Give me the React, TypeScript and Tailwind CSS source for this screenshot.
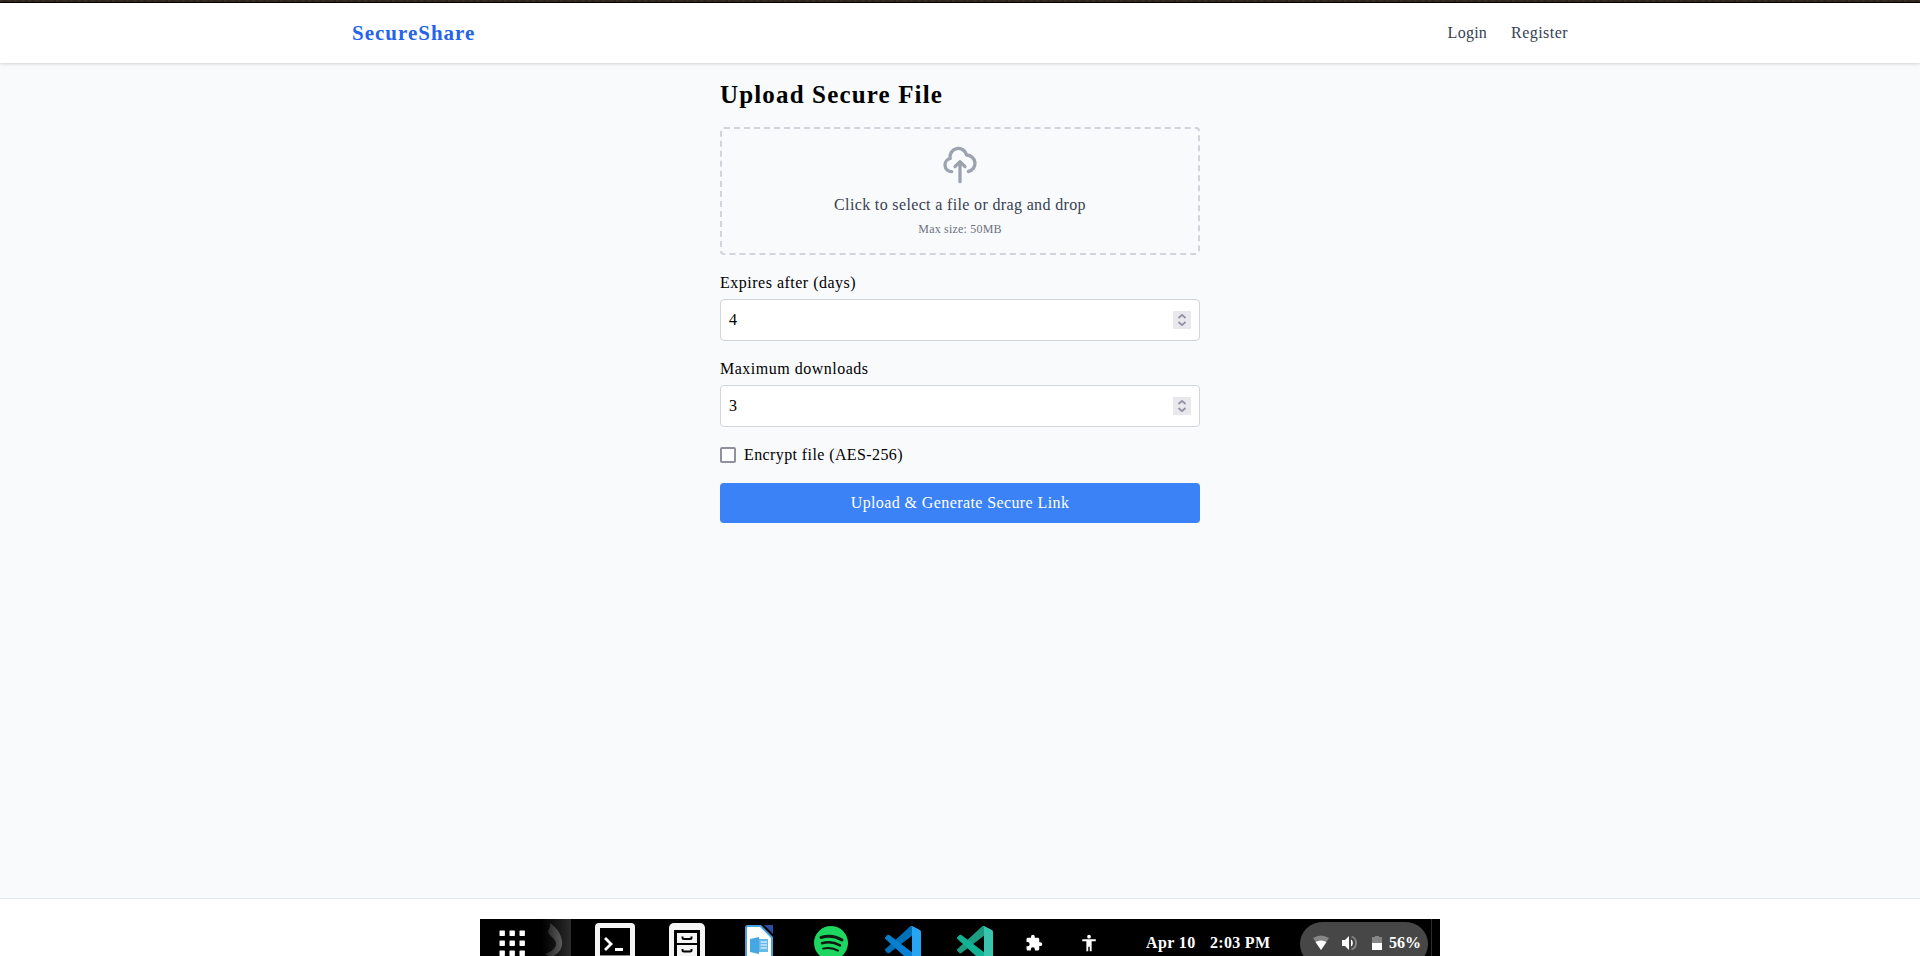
import React from 'react';

function Field({ label, value, labelClass }: { label: string; value: string; labelClass: string }) {
  return (
    <div>
      <div className="flex h-6 items-center text-black"><span className={labelClass}>{label}</span></div>
      <div className="mt-1 flex h-[42px] items-center justify-between rounded border border-[#d1d5db] bg-white px-2 text-black">
        <span>{value}</span>
        <span className="flex size-[18px] items-center justify-center bg-[#e9e9ed]">
          <svg width="18" height="18" viewBox="0 0 18 18" fill="none" stroke="#8f8f9d" strokeWidth="1.7">
            <path d="M5.5 7 9 3.8 12.5 7M5.5 11 9 14.2 12.5 11" />
          </svg>
        </span>
      </div>
    </div>
  );
}

const BAND = 'M96.461 10.796 75.857.876a6.23 6.23 0 0 0-7.107 1.207L1.299 63.583a4.167 4.167 0 0 0 .004 6.162l5.51 5.009a4.167 4.167 0 0 0 5.32.236l81.228-61.62c2.725-2.067 6.639-.124 6.639 3.297v-.24a6.25 6.25 0 0 0-3.539-5.63z';

function CodeLogo({ left, right, dark }: { left: string; right: string; dark: string }) {
  return (
    <svg width="36" height="36" viewBox="0 0 100 100">
      <path d={BAND} fill={dark} />
      <path d={BAND} transform="matrix(1 0 0 -1 0 100)" fill={left} />
      <path d="M75.858 99.126a6.232 6.232 0 0 1-7.108-1.21c2.306 2.307 6.25.674 6.25-2.588V4.672c0-3.262-3.944-4.895-6.25-2.589a6.232 6.232 0 0 1 7.108-1.21l20.6 9.908A6.25 6.25 0 0 1 100 16.413v67.174a6.25 6.25 0 0 1-3.541 5.633z" fill={right} />
    </svg>
  );
}

function Dock() {
  return (
    <div className="mx-auto flex h-[37px] w-[960px] overflow-hidden bg-black text-white">
      <div className="flex w-[91px] shrink-0">
        <svg width="91" height="37" viewBox="0 0 91 37">
          <defs>
            <linearGradient id="shade"><stop offset="0" stopColor="#000" /><stop offset="1" stopColor="#2b2b2b" /></linearGradient>
            <linearGradient id="moon" x1="0" x2="1"><stop offset="0" stopColor="#222" /><stop offset="1" stopColor="#5c5c5c" /></linearGradient>
          </defs>
          <rect x="62" width="29" height="37" fill="url(#shade)" />
          <path d="M70 4c1 5-2 6-2 9 1 4 9 7 8 13-1 4-5 7-11 9l6 3c8-3 12-9 11-16S77 9 70 4Z" fill="url(#moon)" />
          {[11.5, 21.5, 31.5].map((y) => [19.5, 29.5, 39.5].map((x) => <rect key={`${x}-${y}`} x={x} y={y} width="5.4" height="5.4" rx="0.6" fill="#fff" />))}
        </svg>
      </div>
      <div className="ml-2 flex w-[432px] shrink-0">
        <div className="flex w-[72px] justify-center pt-1">
          <svg width="40" height="40" viewBox="0 0 40 40"><rect width="40" height="44" rx="4" fill="#f5f5f5" /><path d="M5 5h30v27H5z" fill="#000" /><path d="M5 32h30v1H5z" fill="#888" /><path d="m10 15 6 6-6 6M20 26.5h8" fill="none" stroke="#fff" strokeWidth="2.8" /></svg>
        </div>
        <div className="flex w-[72px] justify-center pt-1">
          <svg width="36" height="40" viewBox="0 0 36 40"><rect width="36" height="44" rx="5" fill="#f5f5f5" /><path d="M5 7h26v33H5z" fill="#000" /><path d="M8 10h20v10H8zM8 22h20v12H8z" fill="#f5f5f5" /><path d="M13.500 13.500v1q0 1.500 1.500 1.500h6q1.500 0 1.500-1.500v-1M13.500 26v1q0 1.500 1.500 1.500h6q1.500 0 1.500-1.500v-1" fill="none" stroke="#000" strokeWidth="2" /></svg>
        </div>
        <div className="flex w-[72px] justify-center pt-1.5">
          <svg width="28" height="34" viewBox="0 0 28 34"><path d="M3 1h12.500L27 12.500V37H1V3q0-2 2-2z" fill="#fff" stroke="#4ba3dc" strokeWidth="2" /><path d="M19 0h9v9z" fill="#2a4f9e" /><path d="m5 14 9-2v17l-9-2z" fill="#45a8e2" /><path d="M14 14h9v13h-9z" fill="#69b9e8" /><path d="M15.500 17H22M15.500 20H22M15.500 23H22" stroke="#fff" /></svg>
        </div>
        <div className="flex w-[72px] justify-center pt-[7px]">
          <svg width="34" height="34" viewBox="0 0 34 34"><circle cx="17" cy="17" r="17" fill="#1ed760" /><g fill="none" stroke="#101810" strokeLinecap="round"><path d="M7 11.500c7-2 15-1 21 2.500" strokeWidth="3" /><path d="M8 17.200c6-1.700 12.500-1 18 2.200" strokeWidth="2.500" /><path d="M9 22.600c5-1.300 10.500-.7 15 2" strokeWidth="2" /></g></svg>
        </div>
        <div className="flex w-[72px] justify-center pt-[7px]"><CodeLogo left="#087fd0" dark="#0070b8" right="#27a5f2" /></div>
        <div className="flex w-[72px] justify-center pt-[7px]"><CodeLogo left="#12b394" dark="#1d9c82" right="#38c5ae" /></div>
      </div>
      <div className="ml-[14px] flex h-[37px] w-[55px] shrink-0 items-start pt-[15px]">
        <svg width="18" height="18" viewBox="0 0 24 24" fill="#fff"><path d="M20.500 11H19V7c0-1.100-.9-2-2-2h-4V3.500a2.500 2.500 0 0 0-5 0V5H4c-1.100 0-2 .9-2 2v3.800h1.500a2.700 2.700 0 0 1 0 5.400H2V20c0 1.100.9 2 2 2h3.800v-1.500a2.700 2.700 0 0 1 5.400 0V22H17c1.100 0 2-.9 2-2v-4h1.500a2.500 2.500 0 0 0 0-5z" /></svg>
      </div>
      <div className="flex w-[66px] shrink-0 pt-[15px]">
        <svg width="18" height="18" viewBox="0 0 24 24" fill="#fff"><path d="M12 1a2.500 2.500 0 1 1 0 5 2.500 2.500 0 0 1 0-5m9 8.500h-5.500V23H13v-6h-2v6H8.500V9.500H3V7h18z" /></svg>
      </div>
      <div className="flex w-[64px] shrink-0 pt-3 text-[16px] leading-6 font-bold"><span className="tracking-[0.4px]">Apr 10</span></div>
      <div className="flex w-[90px] shrink-0 pt-3 text-[16px] leading-6 font-bold"><span className="tracking-[0.3px]">2:03 PM</span></div>
      <div className="mt-[3px] flex h-[44px] w-[128px] shrink-0 rounded-[22px] bg-[#474747] pt-[9px]">
        <svg className="ml-3" width="18" height="24" viewBox="0 0 18 24"><path d="M1 7Q9 2 17 7L9 19z" fill="#858585" /><path d="M3.500 11Q9 8 14.500 11L9 19z" fill="#fff" /></svg>
        <svg className="ml-3" width="16" height="24" viewBox="0 0 16 24"><path d="M0 9h3l4-4v14l-4-4H0zM9 8.500c2.500 1 2.500 6 0 7z" fill="#fff" /><path d="M9.500 5.500c6 2 6 11 0 13" fill="none" stroke="#858585" strokeWidth="1.800" /></svg>
        <svg className="ml-[14px]" width="10" height="24" viewBox="0 0 10 24"><path d="M3 5h4v1h3v6H0V6h3z" fill="#858585" /><path d="M0 12h10v7H0z" fill="#fff" /></svg>
        <span className="ml-[7px] text-[16px] leading-6 font-bold">56%</span>
      </div>
      <div className="ml-[3px] w-px shrink-0 bg-[#2e2e2e]" />
    </div>
  );
}

export default function App() {
  return (
    <div className="flex h-[956px] w-[1920px] flex-col overflow-hidden bg-[#f9fafc] font-['Liberation_Serif',serif] text-base text-[#374151]">
      <div className="h-[3px] shrink-0 border-b border-black bg-[repeating-linear-gradient(90deg,#3d3225_0px,#2a241a_5px,#382e22_9px,#292119_14px)]" />
      <header className="z-10 h-[60px] shrink-0 bg-white shadow-[0_1px_3px_rgba(0,0,0,0.16)]">
        <div className="mx-auto flex h-full w-[1216px] items-center justify-between">
          <span className="text-[21px] leading-7 font-bold tracking-[1px] text-[#2563eb]">SecureShare</span>
          <nav className="flex gap-6"><a className="tracking-[0.25px]">Login</a><a className="tracking-[0.45px]">Register</a></nav>
        </div>
      </header>
      <main className="mx-auto w-[480px] flex-1 pt-4">
        <h1 className="mb-4 text-[25px] leading-8 font-bold text-black"><span className="tracking-[1.15px]">Upload Secure File</span></h1>
        <div className="flex flex-col gap-4">
          <div className="flex h-32 flex-col items-center rounded border-2 border-dashed border-[#d1d5db] p-4">
            <svg className="size-10 shrink-0" viewBox="0 0 24 24" fill="none" stroke="#9ca3af" strokeWidth="2" strokeLinecap="round" strokeLinejoin="round"><path d="M7 16a4 4 0 01-.88-7.903A5 5 0 1115.9 6L16 6a5 5 0 011 9.9M15 13l-3-3m0 0l-3 3m3-3v12" /></svg>
            <p className="mt-2 leading-6 tracking-[0.35px]">Click to select a file or drag and drop</p>
            <p className="mt-1 text-xs leading-4 tracking-[0.2px] text-[#6b7280]">Max size: 50MB</p>
          </div>
          <Field label="Expires after (days)" value="4" labelClass="tracking-[0.5px]" />
          <Field label="Maximum downloads" value="3" labelClass="tracking-[0.5px]" />
          <label className="flex h-6 items-center gap-2 text-black">
            <span className="size-4 rounded-[2px] border-2 border-[#8f8f9d] bg-white" />
            <span className="tracking-[0.4px]">Encrypt file (AES-256)</span>
          </label>
          <button className="h-10 rounded bg-[#3b82f6] text-white"><span className="tracking-[0.4px]">Upload &amp; Generate Secure Link</span></button>
        </div>
      </main>
      <footer className="h-[58px] shrink-0 border-t border-[#e5e7eb] bg-white pt-5"><Dock /></footer>
    </div>
  );
}
